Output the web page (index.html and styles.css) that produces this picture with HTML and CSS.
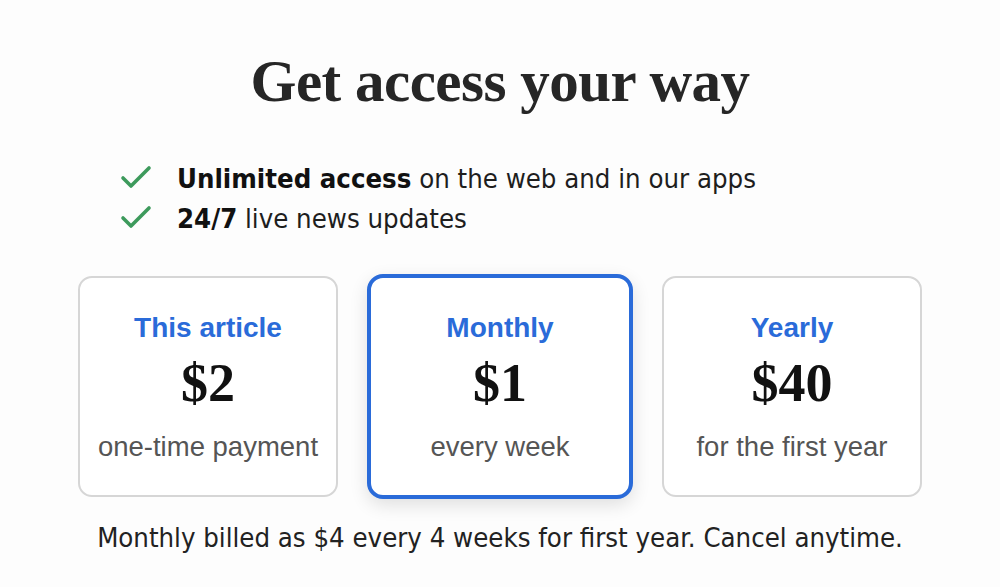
FILE: index.html
```html
<!DOCTYPE html>
<html lang="en">
<head>
<meta charset="utf-8">
<title>Get access your way</title>
<link rel="stylesheet" href="styles.css">
</head>
<body>
<main class="page">
  <h1 class="title">Get access your way</h1>
  <ul class="benefits">
    <li class="benefit">
      <svg class="check" viewBox="0 0 32 26" width="32" height="26"><path d="M3 13 L11 21 L29 3" fill="none" stroke="#3d9a5c" stroke-width="3.6" stroke-linecap="round" stroke-linejoin="round"/></svg>
      <span><b>Unlimited access</b> on the web and in our apps</span>
    </li>
    <li class="benefit">
      <svg class="check" viewBox="0 0 32 26" width="32" height="26"><path d="M3 13 L11 21 L29 3" fill="none" stroke="#3d9a5c" stroke-width="3.6" stroke-linecap="round" stroke-linejoin="round"/></svg>
      <span><b>24/7</b> live news updates</span>
    </li>
  </ul>
  <div class="plans">
    <div class="plan">
      <div class="plan-name">This article</div>
      <div class="plan-price">$2</div>
      <div class="plan-note">one-time payment</div>
    </div>
    <div class="plan selected">
      <div class="plan-name">Monthly</div>
      <div class="plan-price">$1</div>
      <div class="plan-note">every week</div>
    </div>
    <div class="plan">
      <div class="plan-name">Yearly</div>
      <div class="plan-price">$40</div>
      <div class="plan-note">for the first year</div>
    </div>
  </div>
  <p class="footnote">Monthly billed as $4 every 4 weeks for first year. Cancel anytime.</p>
</main>
</body>
</html>
```
FILE: styles.css
```css
html, body {
  margin: 0;
  padding: 0;
  background: #fdfdfd;
}
.page {
  width: 1000px;
  height: 587px;
  box-sizing: border-box;
  padding-top: 48px;
  display: flex;
  flex-direction: column;
  align-items: center;
  color: #1c1c1c;
}
.title {
  margin: 0;
  font-family: "Liberation Serif", serif;
  font-weight: 700;
  font-size: 59px;
  line-height: 66px;
  color: #262626;
  letter-spacing: -0.5px;
}
.benefits {
  list-style: none;
  margin: 44px 0 0 120px;
  padding: 0;
  align-self: flex-start;
}
.benefit {
  display: flex;
  align-items: center;
  height: 40px;
  font-family: "DejaVu Sans Condensed", sans-serif;
  font-stretch: condensed;
  font-size: 27.3px;
  color: #1e1e1e;
}
.benefit b {
  font-weight: 700;
  color: #111;
}
.check {
  margin-right: 25px;
  flex: none;
}
.plans {
  display: flex;
  gap: 29px;
  margin-top: 38px;
}
.plan {
  width: 260px;
  height: 221px;
  box-sizing: border-box;
  border: 2px solid #d6d6d6;
  border-radius: 14px;
  background: #fff;
  display: flex;
  flex-direction: column;
  align-items: center;
  padding-top: 33px;
}
.plan.selected {
  width: 266px;
  height: 225px;
  margin-top: -2px;
  border: 4px solid #2a6bd9;
  border-radius: 16px;
  padding-top: 33px;
  box-shadow: 0 6px 18px rgba(0, 0, 0, 0.12);
}
.plan-name {
  font-family: "Liberation Sans", sans-serif;
  font-weight: 700;
  font-size: 28px;
  line-height: 34px;
  color: #2a6bd9;
}
.plan-price {
  margin-top: 13px;
  font-family: "Liberation Serif", serif;
  font-weight: 700;
  font-size: 54px;
  line-height: 50px;
  color: #111;
}
.plan-note {
  margin-top: 23px;
  font-family: "Liberation Sans", sans-serif;
  font-size: 27.5px;
  line-height: 32px;
  color: #555;
}
.footnote {
  margin: 22px 0 0 0;
  font-family: "DejaVu Sans Condensed", sans-serif;
  font-stretch: condensed;
  font-size: 27.3px;
  line-height: 34px;
  color: #222;
}
```
